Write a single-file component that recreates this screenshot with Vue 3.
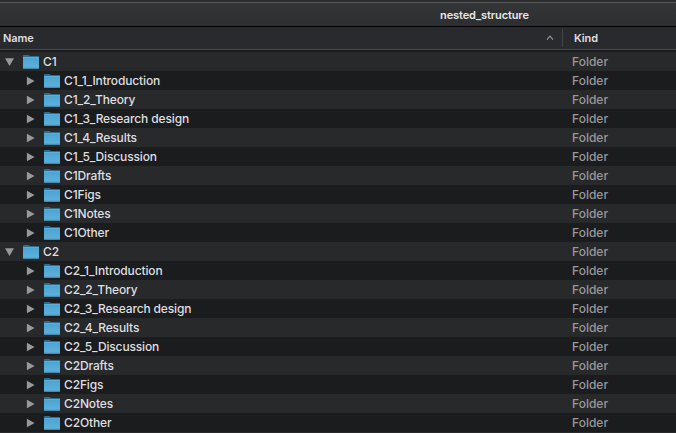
<script setup>
const sections = ['_1_Introduction', '_2_Theory', '_3_Research design', '_4_Results', '_5_Discussion', 'Drafts', 'Figs', 'Notes', 'Other']
const rows = ['C1', 'C2'].flatMap((name) => [
  { name, open: true },
  ...sections.map((s) => ({ name: name + s, open: false })),
])
</script>

<template>
  <div class="window">
    <div class="edge"></div>
    <div class="titlebar"><span class="title">nested_structure</span></div>
    <div class="columns">
      <div class="col-name">
        <span>Name</span>
        <svg class="sort" width="8" height="6" viewBox="0 0 8 6"><path d="M1 4.6 4 1.2 7 4.6" /></svg>
      </div>
      <div class="col-kind">Kind</div>
    </div>
    <div class="list">
      <div v-for="row in rows" :key="row.name" class="row" :class="{ child: !row.open }">
        <div class="cell">
          <svg class="arrow" width="10" height="10" viewBox="0 0 10 10">
            <path v-if="row.open" d="M1 1.3H10L5.5 9Z" />
            <path v-else d="M1.9 .8V9.2L9.6 5Z" />
          </svg>
          <svg class="folder" width="16" height="14" viewBox="0 0 16 14">
            <defs>
              <linearGradient id="front" x1="0" y1="0" x2="0" y2="1">
                <stop offset="0" stop-color="#4aa3d2" />
                <stop offset="1" stop-color="#60b2dc" />
              </linearGradient>
            </defs>
            <path d="M0 .6Q0 0 .6 0H5.4L7.2 1H15.4Q16 1 16 1.8V5H0Z" fill="#2f6d8b" />
            <path d="M0 2H16V13.2Q16 13.7 15.5 13.7H.5Q0 13.7 0 13.2Z" fill="url(#front)" />
            <path d="M0 2H16V3H0Z" fill="#5aaedb" />
            <path d="M0 12.8H16V13.3Q16 13.7 15.5 13.7H.5Q0 13.7 0 13.3Z" fill="#4489ac" />
          </svg>
          <span class="name">{{ row.name }}</span>
        </div>
        <div class="kind">Folder</div>
      </div>
      <div class="row"></div>
    </div>
  </div>
</template>

<style>
body { margin: 0; background: #1b1c1e; overflow: hidden; }
</style>

<style scoped>
.window {
  width: 676px;
  height: 433px;
  overflow: hidden;
  display: flex;
  flex-direction: column;
  background: #1b1c1e;
  font-family: Inter, "Liberation Sans", sans-serif;
  color: #dfdfe0;
}
.edge { height: 2px; flex: none; background: #2c2d2f; }
.titlebar {
  box-sizing: border-box;
  height: 25px;
  flex: none;
  border-top: 1px solid #555658;
  border-bottom: 1px solid #030303;
  background: linear-gradient(#343537, #2d2e30);
  padding-left: 440px;
  font-size: 11px;
  line-height: 24px;
  font-weight: 600;
  letter-spacing: -0.1px;
  color: #e6e6e7;
}
.columns {
  box-sizing: border-box;
  height: 23px;
  flex: none;
  display: flex;
  align-items: center;
  background: #292a2d;
  border-bottom: 1px solid #48494b;
  font-size: 11px;
  line-height: 22px;
  font-weight: 600;
  letter-spacing: -0.1px;
}
.col-name {
  box-sizing: border-box;
  width: 563px;
  height: 18px;
  padding: 0 8px 0 3px;
  border-right: 1px solid #434447;
  display: flex;
  align-items: center;
  justify-content: space-between;
}
.sort { fill: none; stroke: #98999b; stroke-width: 1.1; }
.col-kind { padding-left: 11px; }
.list { padding-top: 2px; flex: none; }
.row { height: 19px; display: flex; }
.row:nth-child(odd) { background: #28292b; }
.cell {
  box-sizing: border-box;
  width: 572px;
  padding-left: 4px;
  display: flex;
  align-items: center;
}
.child .cell { padding-left: 25px; }
.arrow { fill: #98999a; flex: none; }
.folder { margin: 0 4px 0 9px; flex: none; }
.name, .kind { font-size: 12px; line-height: 20px; font-weight: 500; letter-spacing: -0.14px; white-space: nowrap; }
.kind { color: #98999a; letter-spacing: 0; }
</style>
